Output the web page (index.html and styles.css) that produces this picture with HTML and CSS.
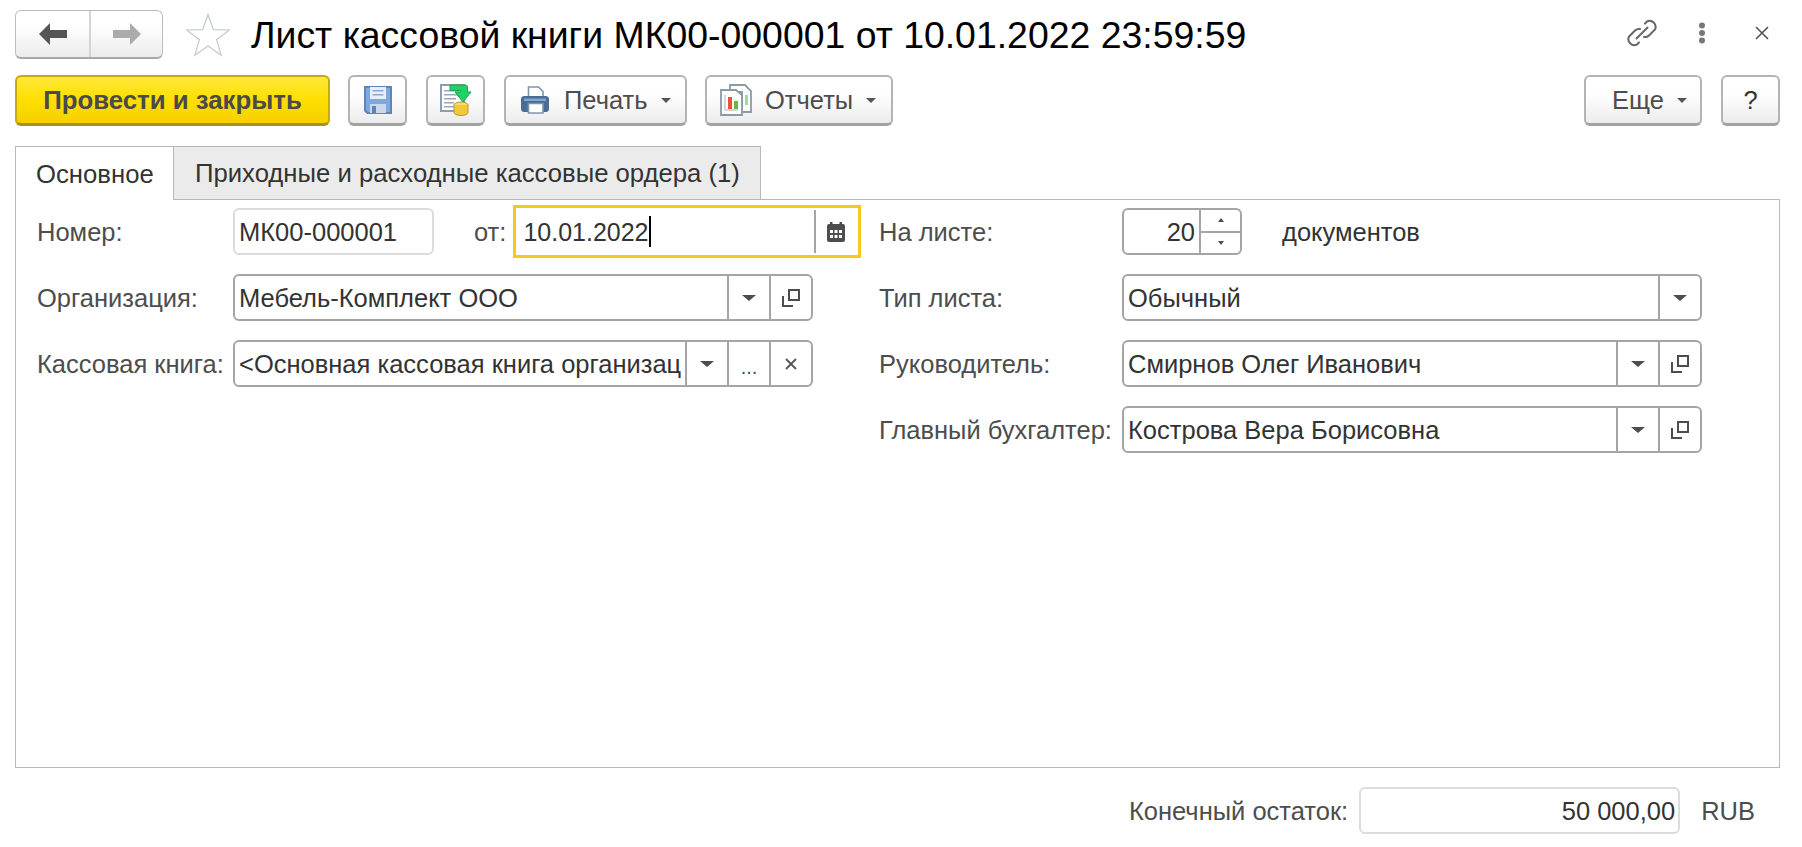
FILE: index.html
```html
<!DOCTYPE html>
<html lang="ru">
<head>
<meta charset="utf-8">
<title>Лист кассовой книги</title>
<link rel="stylesheet" href="styles.css">
</head>
<body>
<header class="header">
  <div class="nav">
    <div class="nav-btn"><svg width="28" height="22" viewBox="0 0 28 22"><path d="M0 11 11 0v7h17v8H11v7z" fill="#555"/></svg></div>
    <div class="nav-btn nav-btn-next"><svg width="28" height="22" viewBox="0 0 28 22"><path d="M28 11 17 0v7H0v8h17v7z" fill="#ababab"/></svg></div>
  </div>
  <svg class="star" width="46" height="44" viewBox="0 0 46 44"><path d="M23 1.500 28.300 16.700 44.400 17 31.600 26.800 36.200 42.200 23 33 9.800 42.200 14.400 26.800 1.600 17 17.700 16.700z" fill="#fff" stroke="#c4c8cc" stroke-width="1.200"/></svg>
  <h1 class="title">Лист кассовой книги МК00-000001 от 10.01.2022 23:59:59</h1>
  <div class="window-icons">
    <svg class="ic-link" width="32" height="32" viewBox="0 0 32 32" fill="none" stroke="#666" stroke-width="2" stroke-linecap="round"><path d="M13 25.500l-2 2a6 6 0 0 1-8-8l6-6a6 6 0 0 1 5-1.500"/><path d="M19 6.500l2-2a6 6 0 0 1 8 8l-6 6a6 6 0 0 1-5 1.500"/><path d="M10.500 21.500 21.500 10.500"/></svg>
    <svg class="ic-dots" width="8" height="22" viewBox="0 0 8 22" fill="#777"><circle cx="4" cy="3.500" r="3"/><circle cx="4" cy="11" r="3"/><circle cx="4" cy="18.500" r="3"/></svg>
    <svg class="ic-x" width="14" height="14" viewBox="0 0 14 14" stroke="#555" stroke-width="1.600"><path d="M1 1 13 13M13 1 1 13"/></svg>
  </div>
</header>

<div class="toolbar">
  <button class="btn btn-primary">Провести и закрыть</button>
  <button class="btn btn-icon"><svg width="28" height="28" viewBox="0 0 28 28"><path d="M0 0h28v28H3l-3-3z" fill="#5f85b5"/><path d="M2 2h24v24H4l-2-2z" fill="#7ea8df"/><path d="M6 1h16v12H6z" fill="#e9eff6"/><path d="M8.500 4h11v1.500h-11zM8.500 8h11v1.500h-11z" fill="#8aa9cf"/><path d="M6 18h16v9H6z" fill="#c9d8ea"/><path d="M8 20h4v7H8z" fill="#5f85b5"/></svg></button>
  <button class="btn btn-icon btn-icon-next"><svg width="32" height="33" viewBox="0 0 32 33"><path d="M0 0h25v28H0z" fill="#8c9db3"/><path d="M2 2h21v24H2z" fill="#fff"/><path d="M4 6h15v1.500H4zM4 10h15v1.500H4zM4 14h12v1.500H4zM4 18h10v1.500H4zM4 22h10v1.500H4z" fill="#9aa6b4"/><path d="M10 1h15.500a2 2 0 0 1 2 2v5H31L23 18 15 8h5.500V6.500H10z" fill="#24d067" stroke="#17a34f"/><ellipse cx="21" cy="21" rx="7" ry="3" fill="#f6dc6c" stroke="#b8962a"/><path d="M14 21v3.500c0 1.500 3 3 7 3s7-1.500 7-3V21" fill="#f0c93c" stroke="#b8962a"/><path d="M14 25v3.500c0 1.500 3 3 7 3s7-1.500 7-3V25" fill="#f0c93c" stroke="#b8962a"/></svg></button>
  <button class="btn btn-menu btn-print"><svg width="28" height="28" viewBox="0 0 28 28"><path d="M7.500 1h10l4.500 4.500V12H7.500z" fill="#fff" stroke="#7f95ab" stroke-width="1.600"/><rect y="10" width="28" height="16" rx="3.500" fill="#476d96"/><path d="M3 12.500h22V15H3z" fill="#86a7c8"/><path d="M7.500 17.500h14.500V27H7.500z" fill="#fff" stroke="#7f95ab" stroke-width="1.600"/></svg><span class="btn-text">Печать</span><i class="caret"></i></button>
  <button class="btn btn-menu btn-reports"><svg width="32" height="32" viewBox="0 0 32 32"><path d="M10 1h15l6 6v21H22V8H10z" fill="#fff" stroke="#8b9aa8" stroke-width="1.800"/><path d="M1 6h15l6 5v20H1z" fill="#fff" stroke="#8b9aa8" stroke-width="1.800"/><path d="M5 11v15h13" fill="none" stroke="#c9c9c9" stroke-width="1.500"/><path d="M8 13h4v12H8z" fill="#ee4f3f"/><path d="M14 17h4v8h-4z" fill="#63b944"/><path d="M25 11h3v10h-3z" fill="#a8d79a"/></svg><span class="btn-text">Отчеты</span><i class="caret"></i></button>
  <div class="spacer"></div>
  <button class="btn btn-more"><span class="btn-text">Еще</span><i class="caret"></i></button>
  <button class="btn btn-help">?</button>
</div>

<nav class="tabs">
  <div class="tab tab-active">Основное</div>
  <div class="tab tab-other">Приходные и расходные кассовые ордера (1)</div>
</nav>

<main class="panel">
  <section class="col col-left">
    <div class="row">
      <label class="label">Номер:</label>
      <div class="field field-readonly field-number"><span class="value">МК00-000001</span></div>
      <label class="label-from">от:</label>
      <div class="field-date">
        <span class="date-value">10.01.2022</span><i class="cursor"></i>
        <span class="date-btn"><svg width="18" height="20" viewBox="0 0 18 20"><path fill="#4d4d4d" fill-rule="evenodd" d="M3 0h2.500v2h7V0H15v2h1a2 2 0 0 1 2 2v14a2 2 0 0 1-2 2H2a2 2 0 0 1-2-2V4a2 2 0 0 1 2-2h1zM3 8v3h3V8zm4.500 0v3h3V8zM12 8v3h3V8zM3 13v3h3v-3zm4.500 0v3h3v-3zM12 13v3h3v-3z"/></svg></span>
      </div>
    </div>
    <div class="row">
      <label class="label">Организация:</label>
      <div class="field"><span class="value">Мебель-Комплект ООО</span><span class="fbtn"><i class="caret caret-dark"></i></span><span class="fbtn"><svg class="open" width="18" height="18" viewBox="0 0 18 18" fill="none" stroke="#4d4d4d" stroke-width="2"><path d="M7 1h10v10H7z"/><path d="M1 7v10h10"/></svg></span></div>
    </div>
    <div class="row">
      <label class="label">Кассовая книга:</label>
      <div class="field"><span class="value">&lt;Основная кассовая книга организац</span><span class="fbtn"><i class="caret caret-dark"></i></span><span class="fbtn fbtn-dots">...</span><span class="fbtn"><svg width="12" height="12" viewBox="0 0 12 12" stroke="#555" stroke-width="1.800"><path d="M1 1 11 11M11 1 1 11"/></svg></span></div>
    </div>
  </section>
  <section class="col col-right">
    <div class="row">
      <label class="label">На листе:</label>
      <div class="field field-spin"><span class="value value-right">20</span>
        <span class="spin"><span class="spin-btn"><i class="tri tri-up"></i></span><span class="spin-btn spin-btn-down"><i class="tri tri-down"></i></span></span>
      </div>
      <span class="unit">документов</span>
    </div>
    <div class="row">
      <label class="label">Тип листа:</label>
      <div class="field"><span class="value">Обычный</span><span class="fbtn"><i class="caret caret-dark"></i></span></div>
    </div>
    <div class="row">
      <label class="label">Руководитель:</label>
      <div class="field"><span class="value">Смирнов Олег Иванович</span><span class="fbtn"><i class="caret caret-dark"></i></span><span class="fbtn"><svg class="open" width="18" height="18" viewBox="0 0 18 18" fill="none" stroke="#4d4d4d" stroke-width="2"><path d="M7 1h10v10H7z"/><path d="M1 7v10h10"/></svg></span></div>
    </div>
    <div class="row">
      <label class="label">Главный бухгалтер:</label>
      <div class="field"><span class="value">Кострова Вера Борисовна</span><span class="fbtn"><i class="caret caret-dark"></i></span><span class="fbtn"><svg class="open" width="18" height="18" viewBox="0 0 18 18" fill="none" stroke="#4d4d4d" stroke-width="2"><path d="M7 1h10v10H7z"/><path d="M1 7v10h10"/></svg></span></div>
    </div>
  </section>
</main>

<footer class="footer">
  <span class="total-label">Конечный остаток:</span>
  <div class="field field-readonly field-total"><span class="total-value">50 000,00</span></div>
  <span class="total-cur">RUB</span>
</footer>
</body>
</html>
```
FILE: styles.css
```css
* { box-sizing: border-box; }
html, body { margin: 0; padding: 0; height: 100%; overflow: hidden; }
body {
  background: #fff;
  font-family: "Liberation Sans", Arial, sans-serif;
  font-size: 25.500px;
  color: #333;
  width: 1802px;
}
.header { display: flex; align-items: center; height: 49px; margin: 10px 0 0 15px; }
.nav {
  display: flex; width: 148px; height: 49px;
  border: 1px solid #bcbcbc; border-bottom: 2px solid #a8a8a8; border-radius: 6px;
  background: linear-gradient(#fff 30%, #ececec);
}
.nav-btn { flex: 0 0 73px; display: flex; align-items: center; justify-content: center; }
.nav-btn-next { flex: 1; border-left: 2px solid #d4d4d4; }
.star { margin-left: 22px; }
.title { margin: 0 0 0 20px; font-size: 37.400px; font-weight: 400; color: #000; white-space: nowrap; line-height: 46px; }
.window-icons { position: absolute; top: 17px; left: 0; width: 1802px; display: flex; align-items: center; justify-content: flex-end; padding-right: 33px; pointer-events: none; }
.ic-link { margin-right: 40px; }
.ic-dots { margin-right: 49px; }

.toolbar { display: flex; height: 51px; margin: 16px 22px 0 15px; }
.btn {
  display: flex; align-items: center; justify-content: center;
  height: 51px; padding: 0; margin: 0;
  font: inherit; color: #4d4d4d;
  border: 2px solid #b4b4b4; border-bottom: 3px solid #a2a2a2; border-radius: 6px;
  background: linear-gradient(#fff 35%, #ececec);
}
.btn-primary {
  width: 315px; margin-right: 18px;
  font-weight: 700; font-size: 25.800px; color: #4a4a4a;
  border-color: #c6aa10; border-bottom-color: #a9921a;
  background: linear-gradient(#ffe83a, #fedf00 50%, #f4d100);
}
.btn-icon { width: 59px; margin-right: 19px; }
.btn-print { width: 183px; margin-right: 18px; justify-content: flex-start; padding-left: 15px; }
.btn-reports { width: 188px; justify-content: flex-start; padding-left: 13px; }
.btn-print .btn-text { margin-left: 15px; }
.btn-reports .btn-text { margin-left: 13px; }
.caret { display: block; width: 0; height: 0; border: 5px solid transparent; border-top: 5px solid #555; border-bottom: 0; margin-left: 13px; }
.spacer { flex: 1; }
.btn-more { width: 118px; margin-right: 19px; justify-content: flex-start; padding-left: 26px; }
.btn-help { width: 59px; color: #333; }

.tabs { display: flex; height: 53px; margin: 20px 0 0 15px; position: relative; z-index: 1; font-size: 25.700px; }
.tab { display: flex; align-items: center; height: 54px; padding-top: 1px; border: 1px solid #b8b8b8; color: #333; white-space: nowrap; }
.tab-active { width: 158px; padding-left: 20px; background: #fff; border-right: 0; border-bottom: 0; }
.tab-other { width: 588px; padding-left: 21px; background: #ebebeb; height: 53px; border-bottom: 0; }

.panel {
  display: flex; height: 569px; margin: 0 22px 0 15px;
  border: 1px solid #b8b8b8; padding: 8px 0 0 21px;
}
.col { display: flex; flex-direction: column; gap: 19px; }
.col-left { width: 776px; }
.col-right { width: 823px; margin-left: 66px; }
.col-left .row { width: 776px; }
.col-right .row { width: 823px; }
.row { display: flex; align-items: center; height: 47px; flex: none; }
.label { flex: 0 0 196px; color: #4d4d4d; white-space: nowrap; padding-top: 2px; }
.col-right .label { flex-basis: 243px; }

.field {
  display: flex; align-items: stretch; flex: 1; min-width: 0; height: 47px;
  border: 2px solid #a5a5a5; border-radius: 6px; background: #fff; overflow: hidden;
}
.field-readonly { border-color: #dcdcdc; }
.field-number { flex: 0 0 201px; }
.value { flex: 1; min-width: 0; margin-right: 4px; padding-left: 4px; line-height: 44px; white-space: nowrap; overflow: hidden; color: #333; }
.value-right { margin-right: 4px; padding-left: 0; text-align: right; }
.fbtn { flex: 0 0 42px; display: flex; align-items: center; justify-content: center; border-left: 2px solid #a5a5a5; }
.fbtn .caret { margin: 0; }
.caret-dark { border-width: 6px 7px 0; border-top-color: #4d4d4d; }
.fbtn-dots { align-items: flex-end; padding-bottom: 6px; line-height: 24px; color: #4d4d4d; font-size: 20px; }
.open { display: block; }

.label-from { flex: 0 0 31px; margin-left: 40px; margin-right: 7px; color: #4d4d4d; padding-top: 2px; }
.field-date {
  flex: 0 0 348px; height: 53px; display: flex; align-items: center; position: relative;
  border: 3px solid #f8c81e; padding-left: 7px; background: #fff;
}
.date-value { color: #333; padding-top: 2px; font-size: 25px; }
.cursor { display: block; width: 2px; height: 31px; background: #000; }
.date-btn { margin-left: auto; height: 43px; width: 44px; padding-right: 2px; border-left: 2px solid #a5a5a5; display: flex; align-items: center; justify-content: center; }

.field-spin { flex: 0 0 120px; }
.spin { flex: 0 0 41px; display: flex; flex-direction: column; border-left: 2px solid #a5a5a5; }
.spin-btn { flex: 1; display: flex; align-items: center; justify-content: center; }
.spin-btn-down { border-top: 2px solid #a5a5a5; }
.tri { display: block; width: 0; height: 0; border-left: 3.500px solid transparent; border-right: 3.500px solid transparent; }
.tri-up { border-bottom: 4px solid #4d4d4d; }
.tri-down { border-top: 4px solid #4d4d4d; }
.unit { margin-left: 40px; color: #333; white-space: nowrap; padding-top: 2px; }

.footer { display: flex; align-items: center; justify-content: flex-end; height: 47px; margin: 19px 0 0 0; padding-right: 47px; }
.total-label { color: #4d4d4d; margin-right: 11px; white-space: nowrap; padding-top: 2px; }
.field-total { flex: 0 0 321px; justify-content: flex-end; align-items: center; padding-right: 3px; }
.total-value { white-space: nowrap; color: #333; padding-top: 2px; }
.total-cur { color: #4d4d4d; margin-left: 21px; white-space: nowrap; padding-top: 2px; }
```
